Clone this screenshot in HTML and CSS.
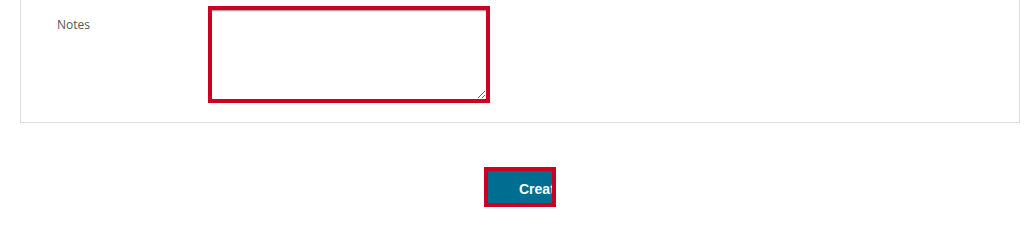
FILE: index.html
```html
<!DOCTYPE html>
<html>
<head>
<meta charset="utf-8">
<link rel="stylesheet" href="styles.css">
</head>
<body>
<div class="page">
  <div class="panel">
    <div class="row">
      <label class="label" for="notes">Notes</label>
      <textarea id="notes" class="notes"></textarea>
    </div>
  </div>
  <div class="actions">
    <button class="create" type="button">Create</button>
  </div>
</div>
</body>
</html>
```
FILE: styles.css
```css
html, body {
  margin: 0;
  padding: 0;
  background: #ffffff;
}
.page {
  width: 1000px;
  margin-left: 20px;
}
.panel {
  border: 1px solid #dddddd;
  border-top: none;
  padding: 6px 0 19px 0;
}
.row {
  display: flex;
  align-items: flex-start;
}
.label {
  width: 151px;
  padding-left: 36px;
  padding-top: 10px;
  font-family: "Open Sans", "Liberation Sans", sans-serif;
  font-size: 12px;
  line-height: 18px;
  color: #555555;
}
.notes {
  display: block;
  box-sizing: border-box;
  width: 282px;
  height: 97px;
  margin: 0;
  border: 4px solid #cc0022;
  box-shadow: inset 0 1px 0 #a8a8a8, inset 0 2px 0 #e2e2e2;
  background: #ffffff;
  padding: 2px;
  outline: none;
}
.actions {
  display: flex;
  justify-content: center;
  padding-top: 44px;
}
.create {
  box-sizing: border-box;
  width: 72px;
  height: 40px;
  margin: 0;
  border: 4px solid #cc0022;
  background: #006e91;
  color: #ffffff;
  font-family: "Liberation Sans", Arial, sans-serif;
  font-weight: bold;
  font-size: 14px;
  line-height: 16px;
  padding: 3px 0 0 31px;
  text-align: left;
  white-space: nowrap;
  overflow: hidden;
}
```
